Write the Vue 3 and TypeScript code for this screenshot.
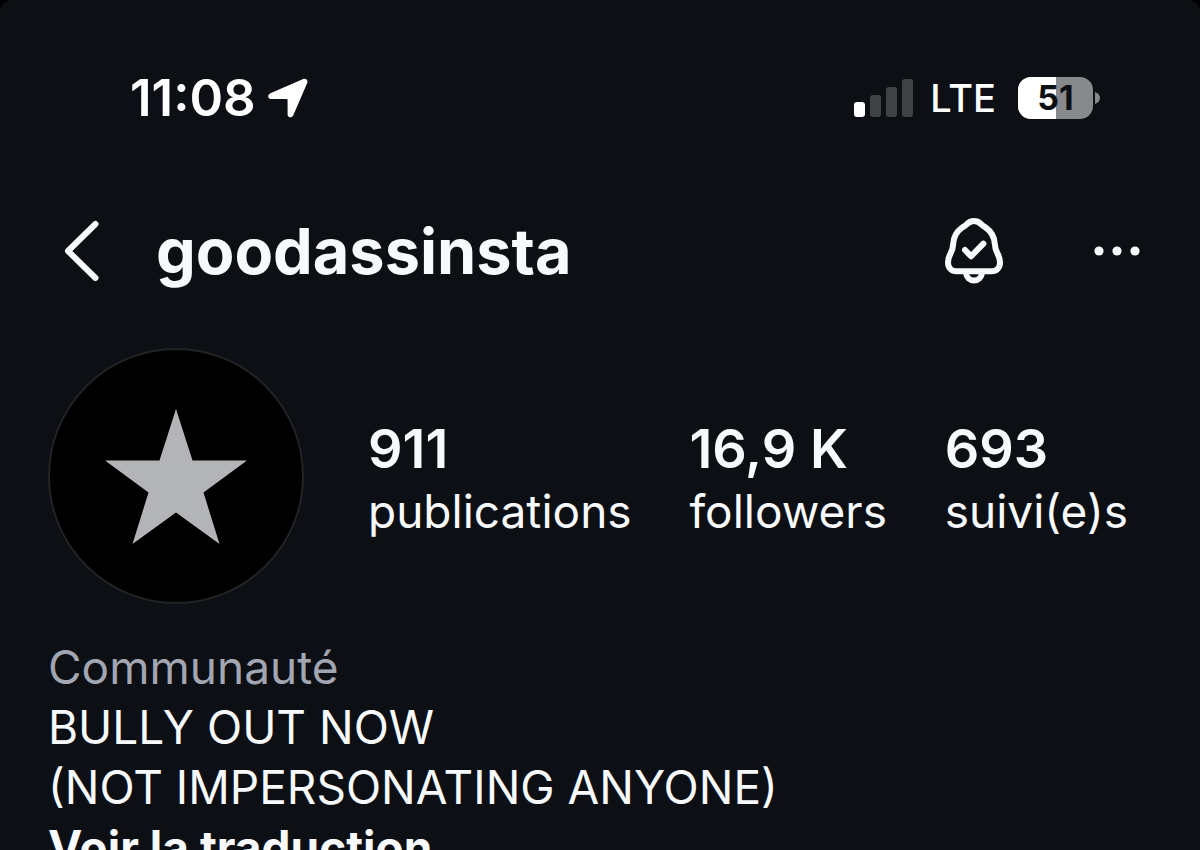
<script setup lang="ts">
interface Stat {
  value: string
  label: string
}

const time = '11:08'
const network = 'LTE'
const battery = 51
const username = 'goodassinsta'
const category = 'Communauté'
const bio: string[] = ['BULLY OUT NOW', '(NOT IMPERSONATING ANYONE)']

const stats: Stat[] = [
  { value: '911', label: 'publications' },
  { value: '16,9 K', label: 'followers' },
  { value: '693', label: 'suivi(e)s' },
]
</script>

<template>
  <div class="screen">
    <div class="status">
      <div class="clock">
        <span>{{ time }}</span>
        <svg class="location" viewBox="0 0 40 40" aria-hidden="true">
          <path
            d="M2.400 15.200 35.200.900C38 0 40.300 2.200 39.200 5L25.200 37.400C24 40.200 19.600 39.700 19.600 36.400V22.400C19.600 21.400 19.200 21 18.200 21H3C-.4 21-1 16.800 2.400 15.200Z"
          />
        </svg>
      </div>
      <div class="signals">
        <svg class="bars" viewBox="0 0 60 38" aria-hidden="true">
          <rect class="on" x="0" y="23" width="11" height="15" rx="3" />
          <rect x="16" y="16" width="11" height="22" rx="3" />
          <rect x="32" y="8" width="11" height="30" rx="3" />
          <rect x="48" y="0" width="11" height="38" rx="3" />
        </svg>
        <span class="network">{{ network }}</span>
        <div class="battery">
          <div class="cell">
            <div class="charge" :style="{ width: battery + '%' }"></div>
            <span class="level">{{ battery }}</span>
          </div>
          <svg class="tip" viewBox="0 0 5 12" aria-hidden="true">
            <path d="M0 0C3 1 5 3 5 6S3 11 0 12Z" />
          </svg>
        </div>
      </div>
    </div>

    <header class="topbar">
      <button class="icon-button" type="button" aria-label="Retour">
        <svg class="back" viewBox="0 0 36 62" aria-hidden="true">
          <path d="M31.500 4 4 31 31.500 58" />
        </svg>
      </button>
      <h1 class="username">{{ username }}</h1>
      <button class="icon-button" type="button" aria-label="Notifications">
        <svg class="bell" viewBox="0 0 60 68" aria-hidden="true">
          <path
            d="M30 4C26.500 4 24.300 5.500 22.500 7.500C21.300 8.900 19.500 9.600 18 10.700C12.500 14.700 9.500 20 9.200 27C9 32 8 34 6.200 37.200C4.500 40.300 4 42.500 4 45.500C4 50.800 7.500 54.300 12.500 54.300H47.500C52.500 54.300 56 50.800 56 45.500C56 42.500 55.500 40.300 53.800 37.200C52 34 51 32 50.800 27C50.500 20 47.500 14.700 42 10.700C40.500 9.600 38.700 8.900 37.500 7.500C35.700 5.500 33.500 4 30 4Z"
          />
          <path d="M22 56C22.500 60.500 25.500 63.500 30 63.500S37.500 60.500 38 56" />
          <path d="M21 33 27 39.300 39.400 26.700" />
        </svg>
      </button>
      <button class="icon-button" type="button" aria-label="Plus d’options">
        <svg class="more" viewBox="0 0 46 10" aria-hidden="true">
          <circle cx="5" cy="5" r="4.600" />
          <circle cx="23" cy="5" r="4.600" />
          <circle cx="41" cy="5" r="4.600" />
        </svg>
      </button>
    </header>

    <main class="profile">
      <section class="summary">
        <svg class="avatar" viewBox="0 0 256 256" role="img" aria-label="Photo de profil">
          <circle cx="128" cy="128" r="127" />
          <polygon
            points="128,61 144.500,112.500 199,112.500 155.500,144.500 171.500,196 128,164.500 84.500,196 100.500,144.500 57,112.500 111.500,112.500"
          />
        </svg>
        <nav class="stats">
          <a v-for="stat in stats" :key="stat.label" class="stat" href="#">
            <strong class="value">{{ stat.value }}</strong>
            <span class="label">{{ stat.label }}</span>
          </a>
        </nav>
      </section>

      <section class="about">
        <p class="category">{{ category }}</p>
        <p v-for="line in bio" :key="line">{{ line }}</p>
        <button class="translate" type="button">Voir la traduction</button>
      </section>
    </main>
  </div>
</template>

<style>
html {
  background: #000;
  scrollbar-width: none;
}

body {
  margin: 0;
}
</style>

<style scoped>
.screen {
  box-sizing: border-box;
  height: 100vh;
  padding: 68px 48px 0;
  overflow: hidden;
  border-radius: 12px 12px 0 0;
  background: #0c0f14;
  color: #f7f9fd;
  font-family: Inter, "Liberation Sans", sans-serif;
  font-size: 46px;
  line-height: 60px;
}

.status,
.clock,
.signals,
.battery,
.topbar,
.summary {
  display: flex;
  align-items: center;
}

.status {
  justify-content: space-between;
  padding: 0 52px 0 82px;
  color: #fff;
}

.clock {
  gap: 12px;
  font-size: 51px;
  font-weight: 600;
}

.location {
  width: 40px;
  height: 40px;
  fill: currentColor;
}

.bars {
  width: 60px;
  height: 38px;
  fill: #404246;
}

.bars .on {
  fill: #fff;
}

.network {
  margin: 0 22px 0 16px;
  font-size: 38px;
  font-weight: 500;
}

.battery {
  gap: 2px;
}

.cell {
  position: relative;
  width: 75px;
  height: 42px;
  overflow: hidden;
  border-radius: 13px;
  background: #88898c;
}

.charge {
  height: 100%;
  background: #fff;
}

.level {
  position: absolute;
  inset: 0;
  color: #0c0f14;
  font-size: 34px;
  font-weight: 700;
  line-height: 42px;
  text-align: center;
}

.tip {
  width: 5px;
  height: 12px;
  fill: #88898c;
}

.topbar {
  margin-top: 83px;
  padding: 0 12px 0 16px;
}

.icon-button {
  display: flex;
  padding: 0;
  border: 0;
  background: none;
  color: inherit;
}

.back,
.bell {
  fill: none;
  stroke: currentColor;
  stroke-linecap: round;
  stroke-linejoin: round;
}

.back {
  width: 36px;
  height: 62px;
  stroke-width: 6;
}

.bell {
  width: 60px;
  height: 68px;
  stroke-width: 6;
}

.more {
  width: 46px;
  height: 10px;
  margin-left: 90px;
  fill: currentColor;
}

.username {
  flex: 1;
  margin: 0 0 0 56px;
  font-size: 63px;
  font-weight: 700;
  line-height: 80px;
}

.summary {
  margin-top: 57px;
}

.avatar {
  flex: none;
  width: 256px;
  height: 256px;
}

.avatar circle {
  fill: #000;
  stroke: #222326;
  stroke-width: 2;
}

.avatar polygon {
  fill: #b3b4b8;
}

.stats {
  display: flex;
  flex: 1;
  justify-content: space-between;
  margin: 6px 24px 0 64px;
}

.stat {
  display: flex;
  flex-direction: column;
  color: inherit;
  text-decoration: none;
}

.value {
  font-size: 54px;
  font-weight: 600;
  line-height: 64px;
}

.label {
  line-height: 60px;
}

.about {
  margin-top: 33px;
}

.about p {
  margin: 0;
}

.about .category {
  color: #a2a6b2;
}

.translate {
  display: block;
  padding: 0;
  border: 0;
  background: none;
  color: inherit;
  font: inherit;
  font-weight: 700;
}
</style>
